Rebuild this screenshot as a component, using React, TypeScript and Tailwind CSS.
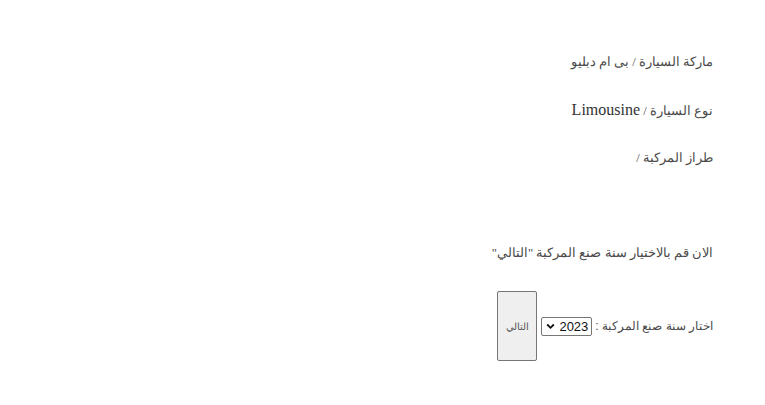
import React from "react";

export default function App() {
  return (
    <div dir="rtl" className="w-[765px] h-[405px] bg-white text-[#4a4a4a] font-['Liberation_Serif','Noto_Sans',serif]">
      <div className="flex flex-col items-start pr-[52px] pt-[50px]">
        <div className="h-[48px] text-[12.6px] leading-[24px]">ماركة السيارة / بى ام دبليو</div>
        <div className="h-[48px] text-[12.6px] leading-[24px]">نوع السيارة / <span className="text-[16px] text-[#333]">Limousine</span></div>
        <div className="h-[95px] text-[12.6px] leading-[24px]">طراز المركبة /</div>
        <div className="h-[50px] text-[12.6px] leading-[24px]">الان قم بالاختيار سنة صنع المركبة "التالي"</div>
        <div className="flex items-center gap-[3px]">
          <span className="text-[12px] font-['Liberation_Sans','Noto_Sans',sans-serif]">اختار سنة صنع المركبة :</span>
          <div className="relative w-[51px] h-[19px] shrink-0 border border-[#767676] rounded-[2px] bg-white">
            <span className="absolute right-[3px] top-0 leading-[17px] text-[13px] text-[#111] font-['Liberation_Sans',sans-serif]">2023</span>
            <svg className="absolute left-[4px] top-[5px]" width="9" height="7" viewBox="0 0 9 7">
              <path d="M1.2 1.5 L4.5 4.8 L7.8 1.5" fill="none" stroke="#111" strokeWidth="1.8" />
            </svg>
          </div>
          <button className="ms-[1px] w-[40px] h-[70px] shrink-0 bg-[#efefef] border border-[#767676] rounded-[2px] text-[10px] font-normal text-[#555] font-['Liberation_Sans','Noto_Sans',sans-serif]">التالي</button>
        </div>
      </div>
    </div>
  );
}
